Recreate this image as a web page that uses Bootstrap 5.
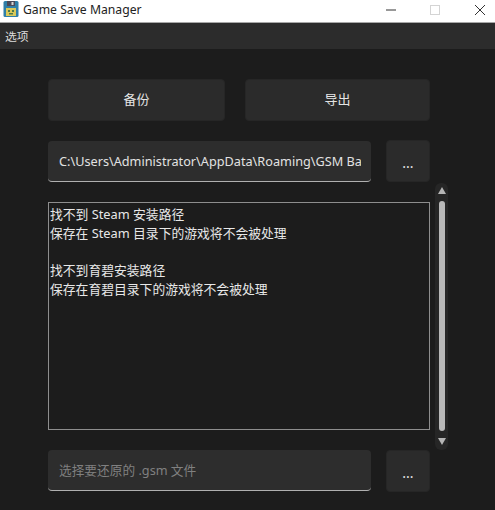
<!DOCTYPE html>
<html lang="zh-CN">
<head>
<meta charset="utf-8">
<title>Game Save Manager</title>
<link rel="stylesheet" href="https://cdn.jsdelivr.net/npm/bootstrap@5.3.0/dist/css/bootstrap.min.css">
<style>
html,body{width:495px;height:510px;overflow:hidden;background:#1c1c1c;}
body{font-family:"Noto Sans","Noto Sans CJK SC",sans-serif;font-size:13px;color:#e6e6e6;}
.titlebar{height:23px;background:#fff;border-bottom:1px solid #a8a8a8;color:#222;padding-left:3px;}
.titlebar .app-name{margin-left:3px;font-size:12.2px;line-height:19px;}
.win-btns{margin-left:auto;margin-right:-7px;}
.win-btn{width:44.5px;height:20px;}
.menubar{height:26px;background:#2c2c2c;padding-left:5px;font-size:11.8px;color:#ddd;padding-top:1px;}
.content{padding:30px 0 0 48px;position:relative;}
.app-btn{background:#2b2b2b;border:1px solid #262626;border-radius:4px;color:#e4e4e4;font-size:13px;height:42px;padding:0;box-shadow:none;}
.app-btn:hover{background:#2b2b2b;color:#e4e4e4;border-color:#262626;}
.w-backup{width:177px;margin-right:20px;}
.w-export{width:185px;}
.field-row{width:382px;}
.app-input{width:323px;height:41px;background:#2d2d2d;border:0;border-bottom:1px solid #b0b0b0;border-radius:4px;color:#e2e2e2;font-size:12.7px;padding:0 10px 0 11px;box-shadow:none;font-family:inherit;}
.app-input:focus{background:#2d2d2d;color:#e2e2e2;box-shadow:none;border-bottom-color:#b0b0b0;}
.app-input::placeholder{color:#808080;opacity:1;}
.dots-btn{width:44px;height:42px;margin-left:15px;line-height:1;margin-top:-1px;padding-top:4px;font-size:14px;}
.restore-btn{margin-top:0;}
.row-path{margin-top:20px;}
.log-area{position:relative;margin-top:20px;}
.log-box{width:382px;height:228px;border:1px solid #8e8e8e;background:#1c1c1c;padding:2px 1px;font-size:12.8px;line-height:18.7px;color:#e8e8e8;white-space:pre-line;}
.row-restore{margin-top:20px;}
.sbar{position:absolute;left:387px;top:-19px;width:13px;height:267px;background:#262626;border-radius:6px;}
.sbar-up,.sbar-down{position:absolute;left:3px;width:0;height:0;border-left:4px solid transparent;border-right:4px solid transparent;}
.sbar-up{top:4px;border-bottom:7px solid #b5b5b5;}
.sbar-down{top:255px;border-top:7px solid #b5b5b5;}
.sbar-thumb{position:absolute;left:4px;top:18px;width:6px;height:230px;background:#b8b8b8;border-radius:3px;}
</style>
</head>
<body>
<div class="titlebar d-flex align-items-start">
  <svg width="17" height="18" viewBox="0 0 17 18" class="flex-shrink-0" aria-hidden="true">
    <rect x="0.5" y="1" width="15" height="16" rx="1.5" fill="#2f7fa8"/>
    <rect x="4" y="1" width="8" height="5" fill="#4a4a58"/>
    <rect x="8.5" y="2" width="2" height="3" fill="#d8d8d8"/>
    <rect x="3" y="8" width="10" height="8" fill="#d9c95a"/>
    <rect x="5" y="10" width="2" height="2" fill="#4d7a4a"/>
    <rect x="9" y="10" width="2" height="2" fill="#4d7a4a"/>
    <rect x="6" y="13" width="4" height="1.5" fill="#4d7a4a"/>
  </svg>
  <span class="app-name">Game Save Manager</span>
  <div class="win-btns d-flex">
    <div class="win-btn d-flex align-items-center justify-content-center">
      <svg width="12" height="12" viewBox="0 0 12 12" aria-hidden="true"><path d="M1 6H11" stroke="#333" stroke-width="1"/></svg>
    </div>
    <div class="win-btn d-flex align-items-center justify-content-center">
      <svg width="12" height="12" viewBox="0 0 12 12" aria-hidden="true"><rect x="1.5" y="1.5" width="9" height="9" fill="none" stroke="#d4d4d4"/></svg>
    </div>
    <div class="win-btn d-flex align-items-center justify-content-center">
      <svg width="12" height="12" viewBox="0 0 12 12" aria-hidden="true"><path d="M1 1L11 11M11 1L1 11" stroke="#333" stroke-width="1"/></svg>
    </div>
  </div>
</div>
<div class="menubar d-flex align-items-center">选项</div>
<div class="content">
  <div class="d-flex">
    <button type="button" class="btn app-btn w-backup">备份</button>
    <button type="button" class="btn app-btn w-export">导出</button>
  </div>
  <div class="d-flex field-row row-path align-items-start">
    <input type="text" class="form-control app-input" value="C:\Users\Administrator\AppData\Roaming\GSM Backups">
    <button type="button" class="btn app-btn dots-btn">...</button>
  </div>
  <div class="log-area">
    <div class="log-box">找不到 Steam 安装路径
保存在 Steam 目录下的游戏将不会被处理

找不到育碧安装路径
保存在育碧目录下的游戏将不会被处理</div>
    <div class="sbar"><span class="sbar-up"></span><span class="sbar-thumb"></span><span class="sbar-down"></span></div>
  </div>
  <div class="d-flex field-row row-restore align-items-start">
    <input type="text" class="form-control app-input" placeholder="选择要还原的 .gsm 文件">
    <button type="button" class="btn app-btn dots-btn restore-btn">...</button>
  </div>
</div>
<script src="https://cdn.jsdelivr.net/npm/bootstrap@5.3.0/dist/js/bootstrap.bundle.min.js"></script>
</body>
</html>
